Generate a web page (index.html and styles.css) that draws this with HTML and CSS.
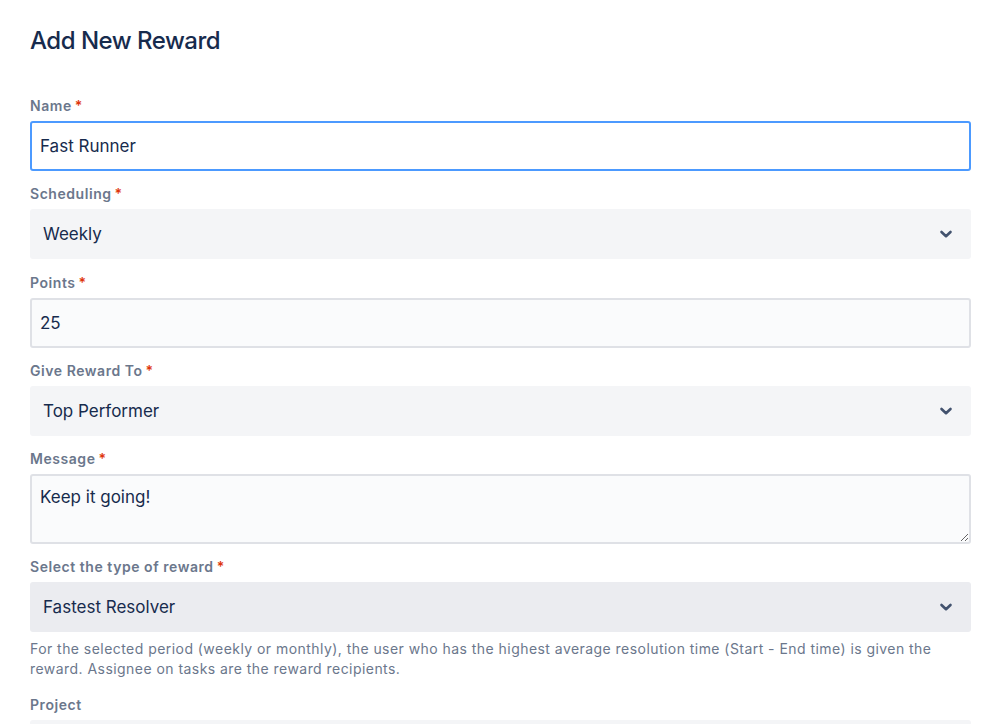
FILE: index.html
```html
<!DOCTYPE html>
<html lang="en">
<head>
<meta charset="utf-8">
<title>Add New Reward</title>
<link rel="stylesheet" href="styles.css">
</head>
<body>
<div class="page">
  <h1 class="title">Add New Reward</h1>
  <form class="form">
    <div class="field">
      <label class="label">Name<span class="req">*</span></label>
      <input class="text-input focused" type="text" value="Fast Runner">
    </div>
    <div class="field">
      <label class="label">Scheduling<span class="req">*</span></label>
      <div class="select"><span>Weekly</span>
        <svg class="chev" width="14" height="10" viewBox="0 0 14 10"><path d="M2.5 3 L7 7.2 L11.5 3" fill="none" stroke="#42526E" stroke-width="2.6" stroke-linecap="round" stroke-linejoin="round"/></svg>
      </div>
    </div>
    <div class="field">
      <label class="label">Points<span class="req">*</span></label>
      <input class="text-input" type="text" value="25">
    </div>
    <div class="field">
      <label class="label">Give Reward To<span class="req">*</span></label>
      <div class="select"><span>Top Performer</span>
        <svg class="chev" width="14" height="10" viewBox="0 0 14 10"><path d="M2.5 3 L7 7.2 L11.5 3" fill="none" stroke="#42526E" stroke-width="2.6" stroke-linecap="round" stroke-linejoin="round"/></svg>
      </div>
    </div>
    <div class="field">
      <label class="label">Message<span class="req">*</span></label>
      <textarea class="text-area">Keep it going!</textarea>
    </div>
    <div class="field">
      <label class="label">Select the type of reward<span class="req">*</span></label>
      <div class="select hovered"><span>Fastest Resolver</span>
        <svg class="chev" width="14" height="10" viewBox="0 0 14 10"><path d="M2.5 3 L7 7.2 L11.5 3" fill="none" stroke="#42526E" stroke-width="2.6" stroke-linecap="round" stroke-linejoin="round"/></svg>
      </div>
      <p class="help">For the selected period (weekly or monthly), the user who has the highest average resolution time (Start - End time) is given the reward. Assignee on tasks are the reward recipients.</p>
    </div>
    <div class="field">
      <label class="label">Project</label>
      <div class="select"><span></span></div>
    </div>
  </form>
</div>
</body>
</html>
```

FILE: styles.css
```css
* { box-sizing: border-box; }
html, body {
  margin: 0;
  padding: 0;
  background: #ffffff;
  height: 724px;
  overflow: hidden;
}
body {
  font-family: Inter, "Noto Sans", "Liberation Sans", sans-serif;
  color: #172B4D;
}
.page {
  padding: 27px 28px 0 30px;
}
.title {
  margin: 0 0 41px 0;
  font-size: 24px;
  line-height: 28px;
  font-weight: 500;
  color: #172B4D;
  letter-spacing: -0.5px;
}
.form {
  display: flex;
  flex-direction: column;
  gap: 13.3px;
}
.field {
  display: flex;
  flex-direction: column;
}
.label {
  font-size: 14px;
  line-height: 20px;
  font-weight: 600;
  color: #6B778C;
  margin-bottom: 5px;
  letter-spacing: 0.55px;
}
.req {
  color: #DE350B;
  margin-left: 3px;
}
.text-input {
  height: 50px;
  width: 100%;
  border: 2px solid #DFE1E6;
  border-radius: 3px;
  background: #FAFBFC;
  padding: 0 8px;
  font-family: inherit;
  font-size: 17px;
  color: #172B4D;
  outline: none;
}
.text-input.focused {
  border-color: #4C9AFF;
  background: #ffffff;
}
.select {
  height: 50px;
  border-radius: 3px;
  background: #F4F5F7;
  display: flex;
  align-items: center;
  justify-content: space-between;
  padding: 0 18px 0 13px;
  font-size: 17px;
  color: #172B4D;
}
.select.hovered {
  background: #EBECF0;
}
.chev {
  flex: none;
}
.text-area {
  height: 70px;
  width: 100%;
  border: 2px solid #DFE1E6;
  border-radius: 3px;
  background: #FAFBFC;
  padding: 11px 8px;
  font-family: inherit;
  font-size: 17px;
  line-height: 20px;
  color: #172B4D;
  resize: vertical;
  outline: none;
  display: block;
}
.help {
  margin: 7px 0 2px 0;
  font-size: 14px;
  line-height: 20px;
  color: #6B778C;
  letter-spacing: 0.45px;
}
```
